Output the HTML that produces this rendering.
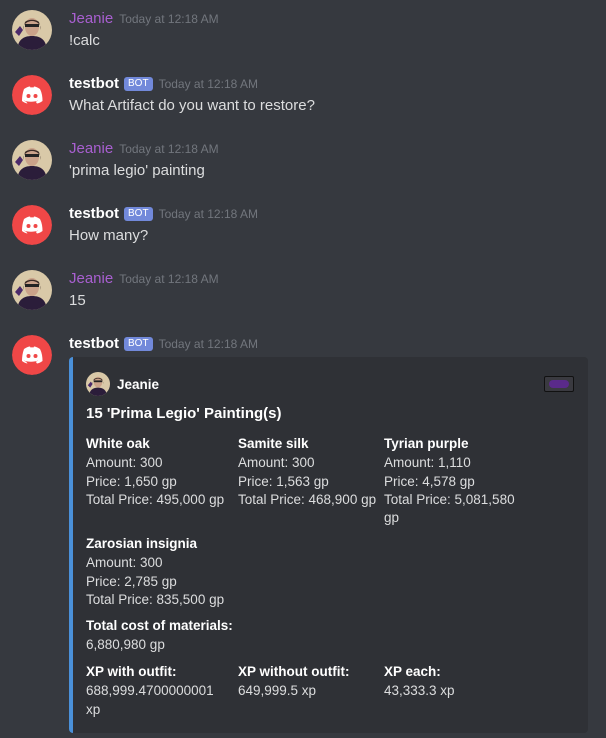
<!DOCTYPE html>
<html><head><style>
body{margin:0;width:606px;height:738px;background:#36393f;font-family:"Liberation Sans",sans-serif;overflow:hidden;position:relative}
.a{position:absolute}
.av{position:absolute;left:12px;width:40px;height:40px;border-radius:50%;overflow:hidden}
.nm{position:absolute;left:69px;font-size:15px;font-weight:bold;color:#fff;line-height:18px}
.nm.j{color:#a85fd0;font-weight:normal}
.ts{font-size:12px;color:#72767d;font-weight:normal;margin-left:6px}
.bot{display:inline-block;background:#7289da;color:#fff;font-size:10px;font-weight:normal;padding:1px 4px;border-radius:3px;margin-left:5px;vertical-align:2px;line-height:12px}
.tx{position:absolute;left:69px;font-size:15px;color:#dcddde;line-height:20px}
.emb{position:absolute;left:69px;top:357px;width:519px;height:376px;background:#2f3136;border-left:4px solid #4a90d9;border-radius:4px;box-sizing:border-box}
.e{position:absolute;font-size:13.5px;color:#dcddde;line-height:18px;white-space:nowrap}
.b{font-weight:bold;color:#fff}
</style></head><body>
<svg width="0" height="0" style="position:absolute"><defs>
<symbol id="dc" viewBox="0 0 40 40"><circle cx="20" cy="20" r="20" fill="#f04747"/><path d="M12 14c3-2 5-2.5 6-2.5l.5 1c1-.2 2-.2 3 0l.5-1c1 0 3 .5 6 2.5 2 4 2.5 8 2.5 12-2 1.5-4 2.3-5.5 2.5l-1.2-1.8c1-.4 1.8-.8 2.4-1.3-3.5 1.8-10.9 1.8-14.4 0 .6.5 1.4.9 2.4 1.3L15.5 28.5C14 28.3 12 27.5 10 26c0-4 .5-8 2-12z" fill="#fff"/><circle cx="16.5" cy="21" r="2" fill="#f04747"/><circle cx="23.5" cy="21" r="2" fill="#f04747"/></symbol>
<symbol id="jn" viewBox="0 0 40 40"><rect width="40" height="40" fill="#d9c9a8"/><path d="M5 40c1-10 6-14 15-14s14 4 15 14z" fill="#2b1d3a"/><ellipse cx="20" cy="17" rx="7" ry="9" fill="#caa28a"/><path d="M11 20c0-12 18-12 18 0l-2-8c-3-3-11-3-14 0z" fill="#3a2a25"/><rect x="13" y="14" width="14" height="3" fill="#222"/><path d="M3 22l5-6 3 4-4 6z" fill="#4b2a6a"/></symbol>
</defs></svg>

<svg class="av" style="top:10px" viewBox="0 0 40 40"><use href="#jn"/></svg>
<div class="nm j" style="top:10px">Jeanie<span class="ts">Today at 12:18 AM</span></div>
<div class="tx" style="top:31px">!calc</div>

<svg class="av" style="top:75px" viewBox="0 0 40 40"><use href="#dc"/></svg>
<div class="nm" style="top:75px">testbot<span class="bot">BOT</span><span class="ts">Today at 12:18 AM</span></div>
<div class="tx" style="top:96px">What Artifact do you want to restore?</div>

<svg class="av" style="top:140px" viewBox="0 0 40 40"><use href="#jn"/></svg>
<div class="nm j" style="top:140px">Jeanie<span class="ts">Today at 12:18 AM</span></div>
<div class="tx" style="top:161px">'prima legio' painting</div>

<svg class="av" style="top:205px" viewBox="0 0 40 40"><use href="#dc"/></svg>
<div class="nm" style="top:205px">testbot<span class="bot">BOT</span><span class="ts">Today at 12:18 AM</span></div>
<div class="tx" style="top:226px">How many?</div>

<svg class="av" style="top:270px" viewBox="0 0 40 40"><use href="#jn"/></svg>
<div class="nm j" style="top:270px">Jeanie<span class="ts">Today at 12:18 AM</span></div>
<div class="tx" style="top:291px">15</div>

<svg class="av" style="top:335px" viewBox="0 0 40 40"><use href="#dc"/></svg>
<div class="nm" style="top:335px">testbot<span class="bot">BOT</span><span class="ts">Today at 12:18 AM</span></div>

<div class="emb"></div>
<svg class="a" style="left:86px;top:372px;width:24px;height:24px;border-radius:50%" viewBox="0 0 40 40"><use href="#jn"/></svg>
<div class="e b" style="left:117px;top:376px;font-size:13.5px">Jeanie</div>
<div class="a" style="left:544px;top:376px;width:28px;height:14px;background:#3a3a40;border:1px solid #111;border-radius:2px"><div style="margin:3px 4px;height:8px;background:#5a2a8a;border-radius:4px"></div></div>
<div class="e b" style="left:86px;top:405px;font-size:15px">15 'Prima Legio' Painting(s)</div>

<div class="e" style="left:86px;top:435px"><span class="b">White oak</span><br><span style="line-height:20px">Amount: 300</span><br>Price: 1,650 gp<br>Total Price: 495,000 gp</div>
<div class="e" style="left:238px;top:435px"><span class="b">Samite silk</span><br><span style="line-height:20px">Amount: 300</span><br>Price: 1,563 gp<br>Total Price: 468,900 gp</div>
<div class="e" style="left:384px;top:435px"><span class="b">Tyrian purple</span><br><span style="line-height:20px">Amount: 1,110</span><br>Price: 4,578 gp<br>Total Price: 5,081,580<br>gp</div>

<div class="e" style="left:86px;top:535px"><span class="b">Zarosian insignia</span><br><span style="line-height:20px">Amount: 300</span><br>Price: 2,785 gp<br>Total Price: 835,500 gp</div>

<div class="e" style="left:86px;top:617px"><span class="b">Total cost of materials:</span><br><span style="line-height:20px">6,880,980 gp</span></div>

<div class="e" style="left:86px;top:663px"><span class="b">XP with outfit:</span><br><span style="line-height:20px">688,999.4700000001</span><br>xp</div>
<div class="e" style="left:238px;top:663px"><span class="b">XP without outfit:</span><br><span style="line-height:20px">649,999.5 xp</span></div>
<div class="e" style="left:384px;top:663px"><span class="b">XP each:</span><br><span style="line-height:20px">43,333.3 xp</span></div>
</body></html>
